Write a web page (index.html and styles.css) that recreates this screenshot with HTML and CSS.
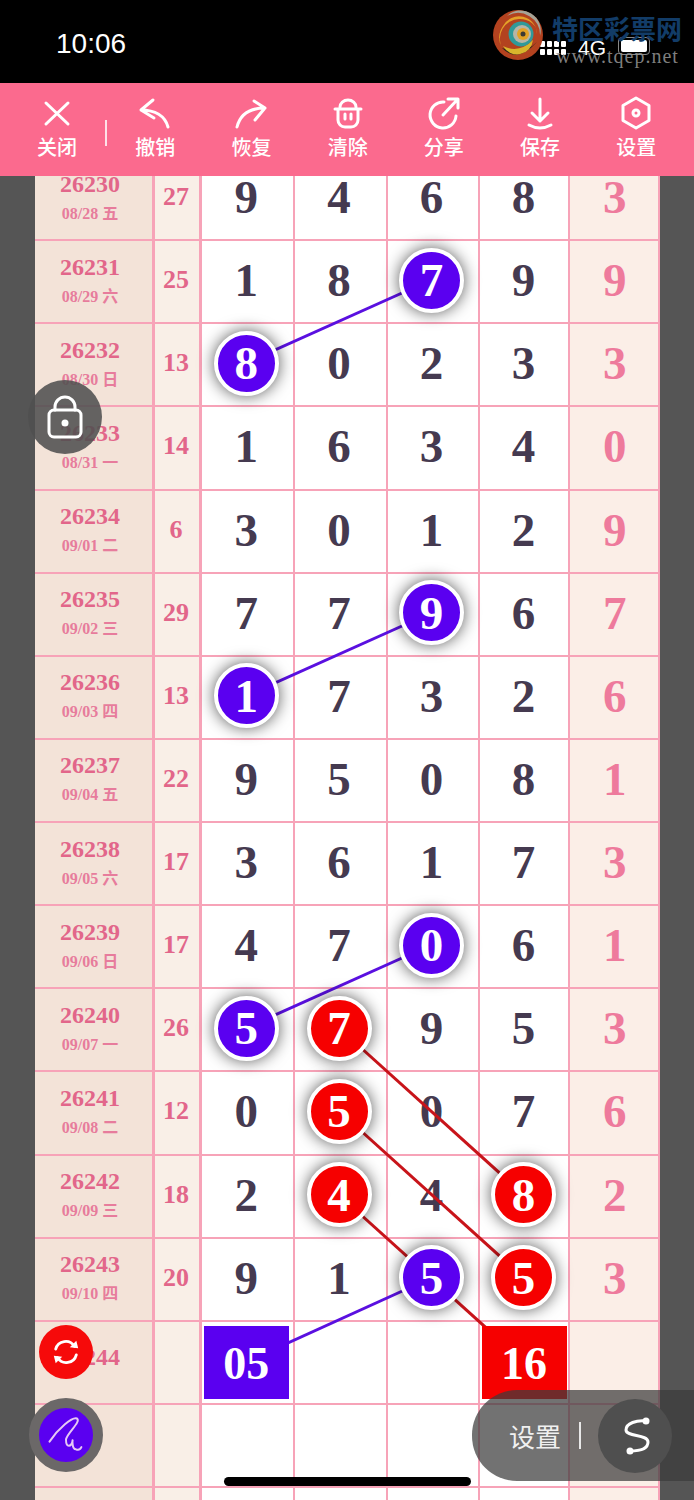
FILE: index.html
```html
<!DOCTYPE html>
<html lang="zh-CN">
<head>
    <meta charset="UTF-8">
    <meta name="viewport" content="width=device-width, initial-scale=1.0">
    <title>走势图</title>
    <link rel="stylesheet" href="styles.css">
</head>
<body>
    <header class="status-bar">
        <span class="clock">10:06</span>
        <div class="status-icons">
            <div class="signal"><i></i><i></i><i></i><i></i><i></i><i></i><i></i><i></i></div>
            <span class="network">4G</span>
            <div class="battery"><span></span></div>
        </div>
        <div class="watermark">
            <svg class="watermark-logo" viewBox="0 0 50 50">
                <circle cx="25" cy="25" r="25" fill="#b3421f"/>
                <path d="M14 6 A22 22 0 0 1 47 26 A20 20 0 0 0 14 6Z" fill="#a5a396"/>
                <path d="M10 16 A18 18 0 0 1 44 24 A17 14 0 0 0 26 9 A20 20 0 0 0 9 38 A20 20 0 0 1 10 16Z" fill="#e4a128"/>
                <path d="M9 38 Q24 54 44 32 Q30 46 9 38Z" fill="#26251a"/>
                <path d="M10 36 Q26 44 40 30 A16 16 0 0 1 10 36Z" fill="#d8b52c"/>
                <circle cx="28" cy="24" r="12.5" fill="#2f9a9a"/>
                <circle cx="29" cy="24" r="9" fill="#b7b5a6"/>
                <circle cx="30" cy="24" r="6" fill="#e3a225"/>
                <circle cx="30" cy="24" r="2.5" fill="#3c3a33"/>
            </svg>
            <div class="watermark-name">特区彩票网</div>
            <div class="watermark-url">www.tqep.net</div>
        </div>
    </header>

    <nav class="toolbar">
        <div class="tool">
            <svg viewBox="0 0 40 40"><path d="M9 10 L31 31 M31 10 L9 31"/></svg>
            <span>关闭</span>
        </div>
        <div class="tool-sep"></div>
        <div class="tool">
            <svg viewBox="0 0 40 40"><path d="M18 7 L6 17 L19 25 M6 17 C20 17 30 23 33 34"/></svg>
            <span>撤销</span>
        </div>
        <div class="tool">
            <svg viewBox="0 0 40 40"><path d="M23 8 L34 15 L24 27 M34 15 C18 15 9 22 6 34"/></svg>
            <span>恢复</span>
        </div>
        <div class="tool">
            <svg viewBox="0 0 40 40"><path d="M7 16 H33 M12 14 A8 7 0 0 1 28 14 M10 16 V27 A7 7 0 0 0 17 34 H23 A7 7 0 0 0 30 27 V16 M17 21 V26 M23 21 V26"/></svg>
            <span>清除</span>
        </div>
        <div class="tool">
            <svg viewBox="0 0 40 40"><path d="M20 9 A13 13 0 1 0 32 23 M19 22 L33 7 M24 6 H34 V15"/></svg>
            <span>分享</span>
        </div>
        <div class="tool">
            <svg viewBox="0 0 40 40"><path d="M20 6 V28 M12 20 L20 28 L28 20 M9 32 Q20 38 31 32"/></svg>
            <span>保存</span>
        </div>
        <div class="tool">
            <svg viewBox="0 0 40 40"><path d="M20 5 L33 12.5 V27.5 L20 35 L7 27.5 V12.5 Z"/><circle cx="20" cy="20" r="3"/></svg>
            <span>设置</span>
        </div>
    </nav>

    <main class="viewport">
        <div class="sheet">
            <div class="row"><div class="issue"><b>26230</b><small>08/28 五</small></div><div class="sum">27</div><div class="num">9</div><div class="num">4</div><div class="num">6</div><div class="num">8</div><div class="last">3</div></div>
            <div class="row"><div class="issue"><b>26231</b><small>08/29 六</small></div><div class="sum">25</div><div class="num">1</div><div class="num">8</div><div class="num"><span class="ball blue">7</span></div><div class="num">9</div><div class="last">9</div></div>
            <div class="row"><div class="issue"><b>26232</b><small>08/30 日</small></div><div class="sum">13</div><div class="num"><span class="ball blue">8</span></div><div class="num">0</div><div class="num">2</div><div class="num">3</div><div class="last">3</div></div>
            <div class="row"><div class="issue"><b>26233</b><small>08/31 一</small></div><div class="sum">14</div><div class="num">1</div><div class="num">6</div><div class="num">3</div><div class="num">4</div><div class="last">0</div></div>
            <div class="row"><div class="issue"><b>26234</b><small>09/01 二</small></div><div class="sum">6</div><div class="num">3</div><div class="num">0</div><div class="num">1</div><div class="num">2</div><div class="last">9</div></div>
            <div class="row"><div class="issue"><b>26235</b><small>09/02 三</small></div><div class="sum">29</div><div class="num">7</div><div class="num">7</div><div class="num"><span class="ball blue">9</span></div><div class="num">6</div><div class="last">7</div></div>
            <div class="row"><div class="issue"><b>26236</b><small>09/03 四</small></div><div class="sum">13</div><div class="num"><span class="ball blue">1</span></div><div class="num">7</div><div class="num">3</div><div class="num">2</div><div class="last">6</div></div>
            <div class="row"><div class="issue"><b>26237</b><small>09/04 五</small></div><div class="sum">22</div><div class="num">9</div><div class="num">5</div><div class="num">0</div><div class="num">8</div><div class="last">1</div></div>
            <div class="row"><div class="issue"><b>26238</b><small>09/05 六</small></div><div class="sum">17</div><div class="num">3</div><div class="num">6</div><div class="num">1</div><div class="num">7</div><div class="last">3</div></div>
            <div class="row"><div class="issue"><b>26239</b><small>09/06 日</small></div><div class="sum">17</div><div class="num">4</div><div class="num">7</div><div class="num"><span class="ball blue">0</span></div><div class="num">6</div><div class="last">1</div></div>
            <div class="row"><div class="issue"><b>26240</b><small>09/07 一</small></div><div class="sum">26</div><div class="num"><span class="ball blue">5</span></div><div class="num"><span class="ball red">7</span></div><div class="num">9</div><div class="num">5</div><div class="last">3</div></div>
            <div class="row"><div class="issue"><b>26241</b><small>09/08 二</small></div><div class="sum">12</div><div class="num">0</div><div class="num"><span class="ball red">5</span></div><div class="num">0</div><div class="num">7</div><div class="last">6</div></div>
            <div class="row"><div class="issue"><b>26242</b><small>09/09 三</small></div><div class="sum">18</div><div class="num">2</div><div class="num"><span class="ball red">4</span></div><div class="num">4</div><div class="num"><span class="ball red">8</span></div><div class="last">2</div></div>
            <div class="row"><div class="issue"><b>26243</b><small>09/10 四</small></div><div class="sum">20</div><div class="num">9</div><div class="num">1</div><div class="num"><span class="ball blue">5</span></div><div class="num"><span class="ball red">5</span></div><div class="last">3</div></div>
            <div class="row"><div class="issue"><b>26244</b></div><div class="sum"></div><div class="num"><span class="box blue">05</span></div><div class="num"></div><div class="num"></div><div class="num"><span class="box red">16</span></div><div class="last"></div></div>
            <div class="row"><div class="issue"></div><div class="sum"></div><div class="num"></div><div class="num"></div><div class="num"></div><div class="num"></div><div class="last"></div></div>
            <div class="row"><div class="issue"></div><div class="sum"></div><div class="num"></div><div class="num"></div><div class="num"></div><div class="num"></div><div class="last"></div></div>
        </div>
        <!-- links between the balls, in page coordinates -->
        <svg class="links" viewBox="0 176 694 1324">
            <g class="link-blue">
                <line x1="431" y1="280" x2="246" y2="363"/>
                <line x1="431" y1="613" x2="246" y2="696"/>
                <line x1="431" y1="945" x2="246" y2="1028"/>
                <line x1="431" y1="1278" x2="246" y2="1362"/>
            </g>
            <g class="link-red">
                <line x1="339" y1="1028" x2="524" y2="1195"/>
                <line x1="339" y1="1111" x2="524" y2="1278"/>
                <line x1="339" y1="1195" x2="524" y2="1362"/>
            </g>
        </svg>
    </main>

    <button class="fab lock">
        <svg viewBox="0 0 40 44"><path d="M10 15 V12 A10 10 0 0 1 30 12 V15"/><rect x="4" y="15" width="32" height="27" rx="5"/><circle class="solid" cx="20" cy="28" r="3.5"/></svg>
    </button>
    <button class="fab refresh">
        <svg viewBox="0 0 32 32"><path d="M5 13 A11 11 0 0 1 25 10 M27 19 A11 11 0 0 1 7 22"/><path class="solid" d="M20 11 L29 12 L27 4 Z M12 21 L3 20 L5 28 Z"/></svg>
    </button>
    <button class="fab pen">
        <svg viewBox="0 0 40 40"><path d="M5 26 C13 14 26 3 30 5 C34 8 21 18 20 24 C20 32 25 31 26 25 C26 23 25 33 29 33 C31 34 33 33 34 31"/></svg>
    </button>

    <div class="side-pill">
        <span class="pill-label">设置</span>
        <span class="pill-sep"></span>
        <div class="pill-knob">
            <svg viewBox="0 0 40 40"><path d="M31 5 C22 4 11 7 11 14 C11 21 33 18 33 26 C33 33 24 35 15 35"/><circle class="solid" cx="31" cy="5" r="3.5"/><circle class="solid" cx="15" cy="35" r="3.5"/></svg>
        </div>
    </div>

    <div class="home-bar"></div>
</body>
</html>
```

FILE: styles.css
```css
* {
    box-sizing: border-box;
}
body {
    margin: 0;
    width: 694px;
    height: 1500px;
    overflow: hidden;
    position: relative;
    background-color: #555555;
    font-family: 'Liberation Serif', 'Noto Sans CJK SC', serif;
}

/* status bar */
.status-bar {
    height: 83px;
    background-color: #000000;
    color: #ffffff;
    display: flex;
    justify-content: space-between;
    align-items: center;
    padding: 4px 44px 0 56px;
    position: relative;
}
.clock {
    font-family: 'Liberation Sans', sans-serif;
    font-size: 28px;
}
.status-icons {
    display: flex;
    align-items: center;
    gap: 12px;
    margin-top: 8px;
}
.signal {
    display: grid;
    grid-template-columns: repeat(4, 5px);
    gap: 2px;
}
.signal i {
    height: 6px;
    background-color: #ffffff;
    border-radius: 1px;
}
.network {
    font-family: 'Liberation Sans', sans-serif;
    font-size: 21px;
}
.battery {
    width: 32px;
    height: 18px;
    border: 1px solid #888888;
    border-radius: 4px;
    padding: 2px;
    margin-top: -4px;
}
.battery span {
    display: block;
    height: 100%;
    background-color: #ffffff;
    border-radius: 2px;
}
.watermark {
    position: absolute;
    top: 10px;
    left: 493px;
    width: 195px;
    height: 55px;
}
.watermark-logo {
    position: absolute;
    left: 0;
    top: 0;
    width: 50px;
    height: 50px;
}
.watermark-name {
    position: absolute;
    left: 59px;
    top: 3px;
    font-family: 'Noto Sans CJK SC', sans-serif;
    font-weight: 700;
    font-size: 26px;
    line-height: 30px;
    white-space: nowrap;
    color: #123c68;
}
.watermark-url {
    position: absolute;
    left: 63px;
    top: 35px;
    font-size: 20px;
    line-height: 22px;
    letter-spacing: 1px;
    white-space: nowrap;
    color: rgba(150, 150, 150, 0.85);
}

/* toolbar */
.toolbar {
    height: 93px;
    background-color: #fb6a8e;
    display: flex;
    padding: 10px 6px 0 9px;
    color: #ffffff;
}
.tool {
    width: 96.2px;
    display: flex;
    flex-direction: column;
    align-items: center;
}
.tool svg {
    width: 40px;
    height: 40px;
    fill: none;
    stroke: #ffffff;
    stroke-width: 3;
    stroke-linecap: round;
    stroke-linejoin: round;
}
.tool span {
    font-family: 'Noto Sans CJK SC', sans-serif;
    font-size: 20px;
    font-weight: 500;
    line-height: 24px;
    margin-top: 2px;
}
.tool-sep {
    width: 2px;
    height: 26px;
    margin-top: 27px;
    background-color: rgba(255, 255, 255, 0.8);
    flex-shrink: 0;
}

/* sheet */
.viewport {
    height: 1324px;
    overflow: hidden;
    position: relative;
}
.sheet {
    width: 625px;
    margin: -18px 0 0 35px;
}
.row {
    display: grid;
    grid-template-columns: 120px 47px 92.5px 93px 92px 90px 90.5px;
    height: 83.13px;
    border-bottom: 2px solid #f7a3b8;
}
.row > div {
    display: flex;
    align-items: center;
    justify-content: center;
    border-right: 2px solid #f7a3b8;
}
.issue {
    flex-direction: column;
    background-color: #f3e3d8;
    color: #e2668a;
    padding: 0 7px 2px 0;
    border-right-width: 3px !important;
}
.issue b {
    font-size: 24px;
    line-height: 28px;
}
.issue b:only-child {
    margin-bottom: 8px;
}
.issue small {
    font-size: 16px;
    line-height: 24px;
    margin-top: 4px;
    font-weight: 700;
    color: #e77c9c;
}
.sum {
    background-color: #f9efe7;
    color: #e2668a;
    font-size: 26px;
    font-weight: 700;
    padding: 0 2px 3px 0;
    border-right-width: 3px !important;
}
.num {
    background-color: #ffffff;
    color: #453a50;
    font-size: 47px;
    font-weight: 700;
    padding: 0 2px 3px 0;
}
.num:nth-child(6) {
    padding-right: 0;
}
.last {
    background-color: #fbeee7;
    color: #ee7a9c;
    font-size: 47px;
    font-weight: 700;
    padding: 0 0 3px 2px;
}
.ball {
    position: relative;
    z-index: 2;
    width: 65px;
    height: 65px;
    border-radius: 50%;
    border: 4px solid #ffffff;
    color: #ffffff;
    display: flex;
    align-items: center;
    justify-content: center;
    box-shadow: 0 0 16px rgba(0, 0, 0, 0.65);
}
.box {
    position: relative;
    z-index: 2;
    width: 85px;
    height: 73px;
    margin-top: 3px;
    color: #ffffff;
    font-size: 46px;
    display: flex;
    align-items: center;
    justify-content: center;
    padding-top: 3px;
}
.box.red {
    margin-right: -1px;
}
.blue {
    background-color: #5a00f0;
}
.red {
    background-color: #f60000;
}
.links {
    position: absolute;
    top: 0;
    left: 0;
    width: 694px;
    height: 1324px;
    z-index: 1;
}
.link-blue {
    stroke: #5a10e0;
    stroke-width: 3;
}
.link-red {
    stroke: #c8141a;
    stroke-width: 3;
}

/* floating buttons */
.fab {
    position: absolute;
    z-index: 5;
    padding: 0;
    border: none;
    border-radius: 50%;
    display: flex;
    align-items: center;
    justify-content: center;
}
.fab svg, .pill-knob svg {
    fill: none;
    stroke: #ffffff;
    stroke-width: 3;
    stroke-linecap: round;
    stroke-linejoin: round;
}
.fab .solid, .pill-knob .solid {
    fill: #ffffff;
    stroke: none;
}
.lock {
    left: 28px;
    top: 380px;
    width: 74px;
    height: 74px;
    background-color: rgba(80, 80, 80, 0.88);
}
.lock svg {
    width: 40px;
    height: 44px;
}
.refresh {
    left: 39px;
    top: 1325px;
    width: 54px;
    height: 54px;
    background-color: #f60a0a;
}
.refresh svg {
    width: 30px;
    height: 30px;
}
.pen {
    left: 29px;
    top: 1398px;
    width: 74px;
    height: 74px;
    background-color: #5a00f0;
    border: 10px solid #6b6868;
}
.pen svg {
    width: 44px;
    height: 44px;
    stroke: #e6c8f5;
    stroke-width: 1.8;
}

.side-pill {
    position: absolute;
    z-index: 5;
    left: 472px;
    top: 1390px;
    width: 222px;
    height: 91px;
    border-radius: 45px 0 0 45px;
    background-color: rgba(60, 60, 60, 0.72);
    display: flex;
    align-items: center;
    padding-left: 37px;
    color: #f0f0f0;
}
.pill-label {
    font-family: 'Noto Sans CJK SC', sans-serif;
    font-size: 26px;
}
.pill-sep {
    width: 2px;
    height: 27px;
    margin-left: 18px;
    background-color: #e8e8e8;
}
.pill-knob {
    width: 74px;
    height: 74px;
    margin-left: 17px;
    border-radius: 50%;
    background-color: #4f4f4f;
    display: flex;
    align-items: center;
    justify-content: center;
}
.pill-knob svg {
    width: 40px;
    height: 40px;
}
.home-bar {
    position: absolute;
    z-index: 6;
    left: 224px;
    top: 1477px;
    width: 247px;
    height: 9px;
    border-radius: 5px;
    background-color: #000000;
}
```
